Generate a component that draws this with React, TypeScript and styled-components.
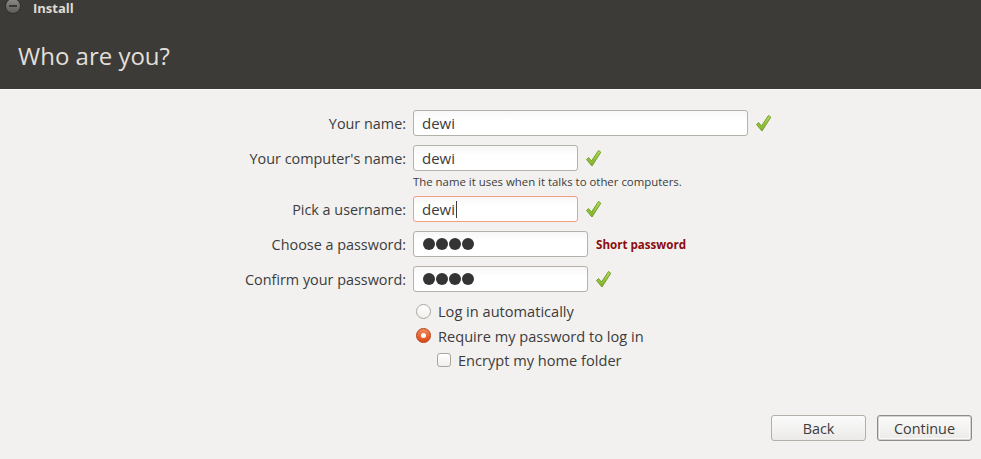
import * as React from "react";
import styled, { createGlobalStyle } from "styled-components";

const GlobalStyle = createGlobalStyle`
  html, body {
    margin: 0;
    padding: 0;
    background: #f2f1f0;
  }
  body {
    font-family: "Open Sans", "Noto Sans", "DejaVu Sans", sans-serif;
    color: #3c3c3c;
  }
`;

const Window = styled.div`
  display: flex;
  flex-direction: column;
  height: 459px;
  width: 981px;
  overflow: hidden;
  background: #f2f1f0;
`;

const Header = styled.header`
  height: 89px;
  background: #3c3b37;
  border-bottom: 1px solid #fbfaf9;
  display: flex;
  flex-direction: column;
`;

const TitleBar = styled.div`
  height: 16px;
  display: flex;
  align-items: center;
  gap: 12px;
  padding-left: 5px;
`;

const CloseButton = styled.div`
  width: 16px;
  height: 16px;
  margin-top: -5px;
  border-radius: 50%;
  background: linear-gradient(#8c8a85, #5f5d59);
  border: 1px solid #2f2e2b;
  box-sizing: border-box;
  display: flex;
  align-items: center;
  justify-content: center;

  &::after {
    content: "";
    width: 8px;
    height: 2px;
    background: #3a3935;
  }
`;

const Title = styled.span`
  font-family: "Open Sans", sans-serif;
  font-weight: 700;
  font-size: 13px;
  line-height: 16px;
  color: #dfdbd2;
`;

const Heading = styled.h1`
  margin: 0;
  padding: 24px 0 0 18px;
  font-weight: 400;
  font-size: 24px;
  line-height: 32px;
  color: #e2dfda;
`;

const Body = styled.main`
  flex: 1;
  display: flex;
  flex-direction: column;
  padding-top: 20px;
`;

const Form = styled.div`
  display: flex;
  flex-direction: column;
  gap: 9px;
`;

const Row = styled.div`
  display: flex;
  align-items: center;
  height: 26px;
  gap: 7px;
`;

const Label = styled.label`
  width: 406px;
  text-align: right;
  font-size: 14.4px;
`;

const Input = styled.div<{ $width: number; $focused?: boolean }>`
  width: ${(p) => p.$width}px;
  height: 26px;
  box-sizing: border-box;
  border: 1px solid ${(p) => (p.$focused ? "#ee9f86" : "#b4b0aa")};
  border-radius: 3px;
  background: linear-gradient(#f7f7f7, #ffffff 40%);
  display: flex;
  align-items: center;
  padding-left: 8px;
  font-size: 15px;
  color: #3c3c3c;
`;

const Caret = styled.span`
  display: inline-block;
  width: 1px;
  height: 17px;
  background: #3c3c3c;
  margin-left: 1px;
  vertical-align: middle;
`;

const Dots = styled.div`
  display: flex;
  gap: 1px;
  padding-left: 1px;
`;

const Dot = styled.span`
  width: 12px;
  height: 12px;
  border-radius: 50%;
  background: #343434;
`;

const Hint = styled.div`
  margin: -7px 0 -3px 413px;
  height: 17px;
  font-size: 11.4px;
  line-height: 17px;
  color: #3c3c3c;
`;

const Warning = styled.span`
  font-size: 11.6px;
  font-weight: 700;
  color: #8b0d0d;
  margin-left: 1px;
`;

const Options = styled.div`
  display: flex;
  flex-direction: column;
  gap: 4.5px;
  margin-top: 9px;
`;

const OptionRow = styled.div<{ $indent: number }>`
  display: flex;
  align-items: center;
  gap: 7px;
  height: 20px;
  padding-left: ${(p) => p.$indent}px;
  font-size: 14.6px;
`;

const Radio = styled.span<{ $checked?: boolean }>`
  width: 15px;
  height: 15px;
  box-sizing: border-box;
  border-radius: 50%;
  border: 1px solid ${(p) => (p.$checked ? "#b43b10" : "#aaa69f")};
  background: ${(p) =>
    p.$checked ? "linear-gradient(#f38a5c, #dc4a17)" : "linear-gradient(#ffffff, #f0efed)"};
  display: flex;
  align-items: center;
  justify-content: center;

  &::after {
    content: "";
    display: ${(p) => (p.$checked ? "block" : "none")};
    width: 5px;
    height: 5px;
    border-radius: 50%;
    background: #ffffff;
  }
`;

const Checkbox = styled.span`
  width: 14px;
  height: 14px;
  box-sizing: border-box;
  border-radius: 3px;
  border: 1px solid #aaa69f;
  background: linear-gradient(#ffffff, #f0efed);
`;

const Footer = styled.footer`
  margin-top: auto;
  display: flex;
  justify-content: flex-end;
  gap: 11px;
  padding: 0 9px 18px 0;
`;

const Button = styled.button<{ $default?: boolean }>`
  width: 95px;
  height: 26px;
  box-sizing: border-box;
  border-radius: 3px;
  border: 1px solid ${(p) => (p.$default ? "#8f8c87" : "#b2aea8")};
  box-shadow: ${(p) => (p.$default ? "inset 0 0 0 1px #d6d3ce, inset 0 0 0 2px #fafafa" : "none")};
  background: linear-gradient(#fbfbfb, #ebeae8);
  font-family: "Open Sans", sans-serif;
  font-size: 14.4px;
  color: #3c3c3c;
  padding: 0;
`;

const Check: React.FC = () => (
  <svg width="17" height="19" viewBox="0 0 17 19">
    <defs>
      <linearGradient id="chk" x1="0" y1="0" x2="0" y2="1">
        <stop offset="0" stopColor="#b6dc62" />
        <stop offset="1" stopColor="#7fae2a" />
      </linearGradient>
    </defs>
    <path
      d="M1.5 10.5 L3.5 8.5 L6.5 12 L13.5 1.5 L15.8 3.2 L7 17 Z"
      fill="url(#chk)"
      stroke="#729f25"
      strokeWidth="1"
      strokeLinejoin="round"
    />
  </svg>
);

const Password: React.FC = () => (
  <Dots>
    <Dot />
    <Dot />
    <Dot />
    <Dot />
  </Dots>
);

export default function App() {
  return (
    <>
      <GlobalStyle />
      <Window>
        <Header>
          <TitleBar>
            <CloseButton />
            <Title>Install</Title>
          </TitleBar>
          <Heading>Who are you?</Heading>
        </Header>
        <Body>
          <Form>
            <Row>
              <Label>Your name:</Label>
              <Input $width={335}>dewi</Input>
              <Check />
            </Row>
            <Row>
              <Label>Your computer's name:</Label>
              <Input $width={165}>dewi</Input>
              <Check />
            </Row>
            <Hint>The name it uses when it talks to other computers.</Hint>
            <Row>
              <Label>Pick a username:</Label>
              <Input $width={165} $focused>
                dewi
                <Caret />
              </Input>
              <Check />
            </Row>
            <Row>
              <Label>Choose a password:</Label>
              <Input $width={175}>
                <Password />
              </Input>
              <Warning>Short password</Warning>
            </Row>
            <Row>
              <Label>Confirm your password:</Label>
              <Input $width={175}>
                <Password />
              </Input>
              <Check />
            </Row>
          </Form>
          <Options>
            <OptionRow $indent={416}>
              <Radio />
              Log in automatically
            </OptionRow>
            <OptionRow $indent={416}>
              <Radio $checked />
              Require my password to log in
            </OptionRow>
            <OptionRow $indent={437}>
              <Checkbox />
              Encrypt my home folder
            </OptionRow>
          </Options>
          <Footer>
            <Button>Back</Button>
            <Button $default>Continue</Button>
          </Footer>
        </Body>
      </Window>
    </>
  );
}
